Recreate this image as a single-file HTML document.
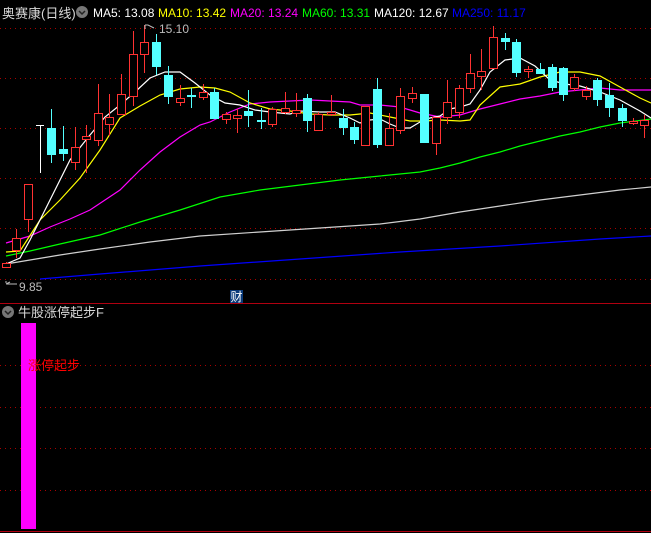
<!DOCTYPE html>
<html><head><meta charset="utf-8"><style>
html,body{margin:0;padding:0;background:#000;width:651px;height:533px;overflow:hidden}
svg{display:block}
text{font-family:"Liberation Sans","Noto Sans CJK SC",sans-serif}
</style></head><body>
<svg width="651" height="533" viewBox="0 0 651 533" xmlns="http://www.w3.org/2000/svg">
<g stroke="#a00" stroke-width="1" stroke-dasharray="1 4">
<line x1="0" y1="28.5" x2="651" y2="28.5"/><line x1="0" y1="78.5" x2="651" y2="78.5"/><line x1="0" y1="128.5" x2="651" y2="128.5"/><line x1="0" y1="178.5" x2="651" y2="178.5"/><line x1="0" y1="228.5" x2="651" y2="228.5"/><line x1="0" y1="279.5" x2="651" y2="279.5"/>
<line x1="0" y1="365.5" x2="651" y2="365.5"/><line x1="0" y1="407.5" x2="651" y2="407.5"/><line x1="0" y1="448.5" x2="651" y2="448.5"/><line x1="0" y1="490.5" x2="651" y2="490.5"/>
</g>
<line x1="0" y1="303.5" x2="651" y2="303.5" stroke="#b00010"/>
<line x1="0" y1="531.5" x2="651" y2="531.5" stroke="#b00010"/>
<g fill="none" stroke-width="1.2">
<polyline stroke="#0000ff" points="40,279 100,274 200,266 300,259 400,252 500,246 600,239 651,236"/>
<polyline stroke="#d0d0d0" points="6,264 60,255 100,249 150,242 200,236 260,232 320,228 380,224 420,219 460,212 500,206 540,200 580,195 620,190 651,187"/>
<polyline stroke="#00ff00" points="6,256 30,251 60,244 100,235 140,222 180,210 220,197 260,190 300,185 340,180 380,176 420,172 440,168 460,163 480,157 500,152 520,146 540,141 560,136 580,132 600,127 620,123 651,119"/>
<polyline stroke="#ff00ff" points="6,243 30,236 50,227 70,219 90,210 120,190 140,170 160,152 180,137 200,125 210,122 230,112 250,104 270,102 290,101 310,100 330,101 350,102 360,105 380,105 400,107 420,113 440,117 460,115 480,109 500,104 520,99 540,96 560,92 580,90 600,88 620,90 651,90"/>
<polyline stroke="#ffff00" points="6,252 20,251 40,220 60,200 80,178 100,150 120,118 140,106 160,95 180,89 200,87 215,88 230,92 250,103 270,109 290,111 310,114 330,115 350,115 370,113 390,117 410,121 425,121 440,120 460,121 470,120 480,105 500,87 520,84 540,77 560,72 580,72 600,76 620,87 640,98 651,103"/>
<polyline stroke="#ffffff" points="6,264 20,258 30,240 50,200 70,160 90,135 105,117 120,105 135,92 150,78 165,72 180,72 195,83 210,95 225,103 240,105 255,110 270,112 290,114 300,111 320,112 335,112 350,118 360,123 370,120 380,119 390,124 400,128 410,128 420,122 430,118 440,116 450,109 460,107 470,104 480,90 490,72 505,60 520,58 535,66 550,80 565,84 580,86 600,92 620,100 640,111 651,118"/>
</g>
<g id="c" stroke-width="1"></g>
<line x1="40.5" y1="125" x2="40.5" y2="173" stroke="#fff"/><line x1="36" y1="125.5" x2="44" y2="125.5" stroke="#fff"/>
<text x="2" y="18" font-size="13" fill="#d8d8d8">奥赛康(日线)</text>
<circle cx="82" cy="12" r="6" fill="#777"/><path d="M79 11l3 3 3-3" stroke="#222" stroke-width="1.5" fill="none"/>
<text x="93" y="17" font-size="12" fill="#fff">MA5: 13.08</text>
<text x="158" y="17" font-size="12" fill="#ffff00">MA10: 13.42</text>
<text x="230" y="17" font-size="12" fill="#ff00ff">MA20: 13.24</text>
<text x="302" y="17" font-size="12" fill="#00ff00">MA60: 13.31</text>
<text x="374" y="17" font-size="12" fill="#fff">MA120: 12.67</text>
<text x="452" y="17" font-size="12" fill="#0000ff">MA250: 11.17</text>
<path d="M145 25v4M145 25h3l6 3" stroke="#bbb" fill="none"/>
<text x="159" y="33" font-size="12" fill="#bbb">15.10</text>
<path d="M6 283v-2M6 284l4-2M6 284h11" stroke="#bbb" fill="none"/>
<text x="19" y="291" font-size="12" fill="#bbb">9.85</text>
<rect x="230" y="290" width="13" height="13" fill="#0a3a7a"/>
<text x="230.5" y="301" font-size="12" fill="#fff">财</text>
<circle cx="8" cy="312" r="6" fill="#777"/><path d="M5 311l3 3 3-3" stroke="#222" stroke-width="1.5" fill="none"/>
<text x="18" y="317" font-size="13" fill="#d8d8d8">牛股涨停起步F</text>
<rect x="21" y="323" width="15" height="206" fill="#ff00ff"/>
<text x="28" y="370" font-size="13" fill="#ff0000">涨停起步</text>
</svg>
<script>
var d=[[6,'r',263,267,262,268],[16,'r',238,250,229,258],[28,'r',184,219,184,232],[51,'c',128,155,109,163],[63,'c',149,154,126,161],[75,'r',147,162,127,170],[86,'r',136,139,125,173],[98,'r',113,140,84,146],[109,'r',117,124,94,136],[121,'r',94,114,74,115],[133,'r',54,96,31,106],[144,'r',42,54,25,73],[156,'c',42,67,34,75],[168,'c',75,97,66,104],[180,'r',98,102,85,106],[191,'c',95,97,88,108],[203,'r',92,97,84,100],[214,'c',92,119,88,119],[226,'r',114,119,112,124],[237,'r',115,118,109,133],[248,'c',111,116,90,127],[261,'c',120,122,108,129],[272,'r',109,124,107,127],[285,'r',108,112,92,114],[296,'r',110,113,93,117],[307,'c',98,121,94,132],[318,'r',114,130,112,131],[331,'r',112,114,95,116],[343,'c',118,128,109,135],[354,'c',127,140,122,144],[365,'r',106,145,106,145],[377,'c',89,145,78,148],[389,'r',128,145,113,145],[400,'r',96,130,88,134],[412,'r',93,98,87,103],[424,'c',94,143,94,143],[436,'r',117,143,117,155],[447,'r',102,117,80,124],[459,'r',88,112,85,118],[470,'r',73,88,54,93],[481,'r',71,76,49,90],[493,'r',37,68,26,68],[505,'c',38,42,33,50],[516,'c',42,73,39,77],[528,'r',69,71,66,78],[540,'c',69,74,63,74],[552,'c',67,88,64,91],[563,'c',68,95,67,101],[574,'r',77,88,74,91],[586,'r',90,96,86,100],[597,'c',80,100,78,106],[609,'c',95,108,83,117],[622,'c',108,121,104,127],[633,'r',121,123,118,125],[644,'r',120,125,115,138]];
var g=document.getElementById('c'),s='';
d.forEach(function(a){var x=a[0],col=a[1]=='r'?'#ff3232':'#54ffff';
s+='<line x1="'+(x+.5)+'" y1="'+a[4]+'" x2="'+(x+.5)+'" y2="'+a[5]+'" stroke="'+col+'"/>';
if(a[1]=='r')s+='<rect x="'+(x-3.5)+'" y="'+(a[2]+.5)+'" width="8" height="'+Math.max(1,a[3]-a[2])+'" fill="#000" stroke="'+col+'"/>';
else s+='<rect x="'+(x-4)+'" y="'+a[2]+'" width="9" height="'+Math.max(1,a[3]-a[2])+'" fill="'+col+'"/>';});
g.innerHTML=s;
</script>
</body></html>
